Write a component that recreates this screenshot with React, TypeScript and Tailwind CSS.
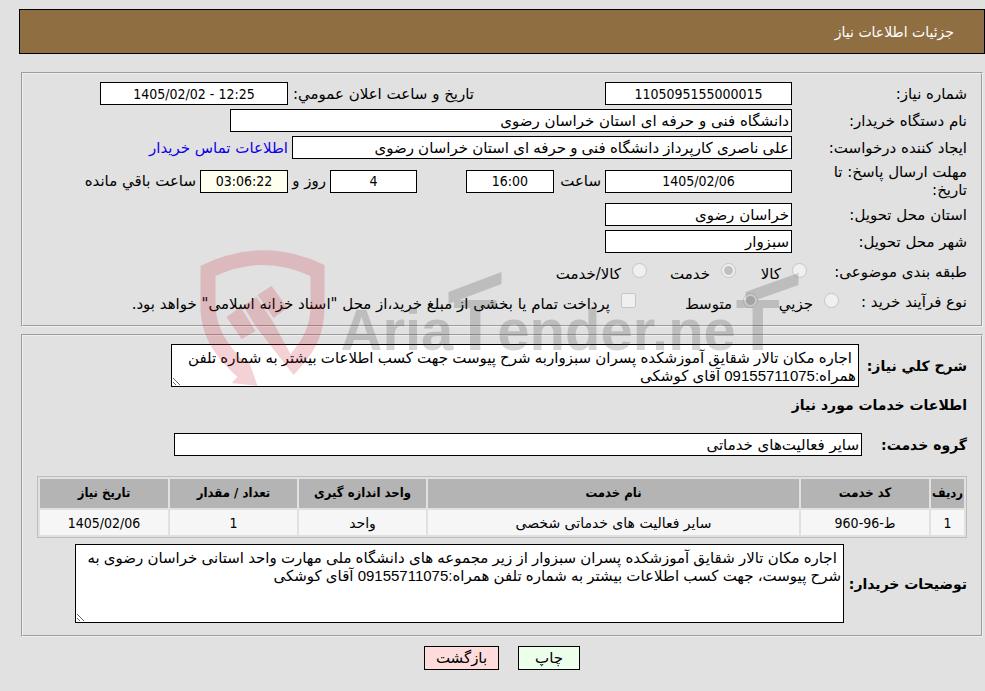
import { useId } from 'react';

const box = 'h-[23px] border border-black px-0.5';
const digits = "text-center text-sm font-['DejaVu_Sans_Condensed',sans-serif]";
const prose = "font-['Liberation_Sans','DejaVu_Sans',sans-serif]";

const Field = ({ label, value, className = '' }: { label: string; value: string; className?: string }) => (
  <input aria-label={label} readOnly defaultValue={value} className={`${box} bg-white ${className}`} />
);

const Row = ({ label, children }: { label: string; children: React.ReactNode }) => (
  <div className="flex items-center">
    <span className="w-[175px] shrink-0 pl-6">{label}</span>
    <div className="flex flex-1 items-center gap-1">{children}</div>
  </div>
);

const Choice = ({ label, name, type = 'radio', checked = false, className = '' }: {
  label: string; name: string; type?: string; checked?: boolean; className?: string;
}) => {
  const id = useId();
  const shape = type === 'radio' ? 'rounded-full' : 'rounded-xs';
  return (
    <span className={`flex items-start ${className}`}>
      <span className="relative mt-0.5 flex">
        <input
          id={id}
          type={type}
          name={name}
          disabled
          defaultChecked={checked}
          className={`peer size-[15px] appearance-none border border-[#c6c6c6] bg-[#f0f0f0] ${shape}`}
        />
        <span className="absolute inset-[3px] hidden rounded-full bg-[#c0c0c0] peer-checked:block" />
      </span>
      <label htmlFor={id} className="pt-1 pr-[11px] whitespace-nowrap">{label}</label>
    </span>
  );
};

const Watermark = () => (
  <svg
    aria-hidden="true"
    viewBox="186 240 613 150"
    className="pointer-events-none absolute top-[240px] left-1/2 h-[150px] w-[613px] -translate-x-1/2"
  >
    <g fill="#c8202e" opacity="0.2">
      <path d="M200 266Q262 235 324 265V306C324 336 314 353 293 375L255 326L243 306L256 297L272 321L290 354C304 338 310 324 310 306V276Q262 254 215 276V306C216 328 226 344 245 363L248 360L257 386L231 383L237 377C212 354 200 334 200 306Z" />
      <path d="M257 295L271 286L287 308L273 318Z" />
      <path d="M226 317L240 307L255 331L241 339Z" />
    </g>
    <g fill="#333" opacity="0.2">
      <path d="M448 292L501 272V284L448 304Z" />
      <path d="M745 292L798 273V285L745 304Z" />
      <text x="340" y="350" direction="ltr" fontSize="58" fontWeight="700" fontFamily="'Liberation Sans', sans-serif">
        Aria<tspan fontSize="72">T</tspan>ender.ne<tspan fontSize="72">T</tspan>
      </text>
    </g>
  </svg>
);

const headers = ['ردیف', 'کد خدمت', 'نام خدمت', 'واحد اندازه گیری', 'تعداد / مقدار', 'تاریخ نیاز'];
const rows = [['1', 'ط-96-960', 'سایر فعالیت های خدماتی شخصی', 'واحد', '1', '1405/02/06']];

export default function App() {
  return (
    <div
      dir="rtl"
      className="relative min-h-screen bg-[#e1e1e1] pt-[9px] pb-5 pl-[19px] font-['DejaVu_Sans',sans-serif] text-[15px] leading-[18px] text-black"
    >
      <header className="flex h-[45px] items-center border border-black bg-[#8f6e42] px-[30px] text-white">
        <h1 className="text-sm">جزئیات اطلاعات نیاز</h1>
      </header>

      <main className="mx-0.5 pt-[18px]">
        <section className="border-2 border-[#f0f0f0] px-[14px] pt-2 pb-3 [border-style:groove]">
          <div className="flex flex-col gap-1">
            <Row label="شماره نیاز:">
              <Field label="شماره نیاز" value="1105095155000015" className={`w-[187px] ${digits}`} />
              <label htmlFor="announce" className="mr-[127px] w-[182px] whitespace-nowrap">تاریخ و ساعت اعلان عمومي:</label>
              <input id="announce" readOnly dir="ltr" defaultValue="1405/02/02 - 12:25" className={`${box} w-[188px] bg-white ${digits}`} />
            </Row>
            <Row label="نام دستگاه خریدار:">
              <Field label="نام دستگاه خریدار" value="دانشگاه فنی و حرفه ای استان خراسان رضوی" className="w-[562px]" />
            </Row>
            <Row label="ایجاد کننده درخواست:">
              <Field label="ایجاد کننده درخواست" value="علی ناصری کارپرداز دانشگاه فنی و حرفه ای استان خراسان رضوی" className={`w-[500px] ${prose}`} />
              <a href="#" className="text-[#1000e8]">اطلاعات تماس خریدار</a>
            </Row>
            <Row label="مهلت ارسال پاسخ: تا تاریخ:">
              <Field label="تاریخ" value="1405/02/06" className={`w-[187px] ${digits}`} />
              <label htmlFor="hour" className="w-[43px]">ساعت</label>
              <input id="hour" readOnly defaultValue="16:00" className={`${box} w-[88px] bg-white ${digits}`} />
              <input id="days" readOnly defaultValue="4" className={`${box} mr-[45px] w-[87px] bg-white ${digits}`} />
              <label htmlFor="days" className="w-[34px] whitespace-nowrap">روز و</label>
              <input id="left" readOnly defaultValue="03:06:22" className={`${box} w-[88px] bg-[#fffff0] ${digits}`} />
              <label htmlFor="left">ساعت باقي مانده</label>
            </Row>
            <Row label="استان محل تحویل:">
              <Field label="استان محل تحویل" value="خراسان رضوی" className="w-[187px]" />
            </Row>
            <Row label="شهر محل تحویل:">
              <Field label="شهر محل تحویل" value="سبزوار" className="w-[187px]" />
            </Row>
          </div>
          <div className="flex pt-2">
            <span className="w-[160px] pt-0.5">طبقه بندی موضوعی:</span>
            <Choice name="category" label="کالا" className="w-[71px]" />
            <Choice name="category" label="خدمت" checked className="w-[89px]" />
            <Choice name="category" label="کالا/خدمت" />
          </div>
          <div className="flex pt-2">
            <span className="w-[128px] pt-0.5">نوع فرآیند خرید :</span>
            <Choice name="process" label="جزیي" className="w-[81px]" />
            <Choice name="process" label="متوسط" checked className="w-[122px]" />
            <Choice name="treasury" type="checkbox" label={'پرداخت تمام یا بخشی از مبلغ خرید،از محل "اسناد خزانه اسلامی" خواهد بود.'} />
          </div>
        </section>

        <section className="mt-[7px] border-2 border-[#f0f0f0] px-[14px] pt-2 pb-3 [border-style:groove]">
          <div className="flex items-center gap-[5px] pl-[134px]">
            <label htmlFor="summary" className="w-[103px] text-sm font-bold">شرح کلي نیاز:</label>
            <textarea
              id="summary"
              readOnly
              className={`block h-[43px] flex-1 overflow-hidden border border-black bg-white px-0.5 pt-1 ${prose}`}
              defaultValue={' اجاره مکان تالار شقایق آموزشکده پسران سبزواربه شرح پیوست جهت کسب اطلاعات بیشتر به شماره تلفن همراه:09155711075 آقای کوشکی'}
            />
          </div>
          <h2 className="pt-2 text-sm font-bold">اطلاعات خدمات مورد نیاز</h2>
          <div className="flex items-center pt-[18px] pl-[137px]">
            <label htmlFor="group" className="w-[105px] text-sm font-bold">گروه خدمت:</label>
            <input id="group" readOnly defaultValue="سایر فعالیت‌های خدماتی" className={`${box} min-w-0 flex-1 bg-white`} />
          </div>
          <table className="mt-5 w-full table-fixed border-separate border-spacing-0.5 border border-[#bcbcbc] text-center text-sm">
            <colgroup>
              <col className="w-[33px]" />
              <col className="w-[128px]" />
              <col />
              <col className="w-[127px]" />
              <col className="w-[127px]" />
              <col className="w-[128px]" />
            </colgroup>
            <thead>
              <tr className="h-[29px] bg-[#b4b4b4] font-['DejaVu_Sans_Condensed',sans-serif] text-[13px]">
                {headers.map((h) => <th key={h} className="p-0 whitespace-nowrap">{h}</th>)}
              </tr>
            </thead>
            <tbody>
              {rows.map((row) => (
                <tr key={row[0]} className="h-[25px] bg-[#f6f6f6]">
                  {row.map((cell, i) => (
                    <td key={i} className={/\d/.test(cell) ? "p-0 font-['DejaVu_Sans_Condensed',sans-serif]" : 'p-0'}>{cell}</td>
                  ))}
                </tr>
              ))}
            </tbody>
          </table>
          <div className="flex items-center gap-[5px] pt-[6px] pl-[38px]">
            <label htmlFor="notes" className="w-[118px] text-sm font-bold whitespace-nowrap">توضیحات خریدار:</label>
            <textarea
              id="notes"
              readOnly
              className={`block h-[79px] flex-1 overflow-hidden border border-black bg-white px-0.5 pt-1 ${prose}`}
              defaultValue={' اجاره مکان تالار شقایق آموزشکده پسران سبزوار از زیر مجموعه های دانشگاه ملی مهارت واحد استانی خراسان رضوی به شرح پیوست، جهت کسب اطلاعات بیشتر به شماره تلفن همراه:09155711075 آقای کوشکی'}
            />
          </div>
        </section>

        <div className="flex justify-center gap-[19px] pt-[9px]">
          <button type="button" className="h-6 w-[62px] border border-black bg-[#ebffeb]">چاپ</button>
          <button type="button" className="h-6 w-[75px] border border-black bg-[#ffdcdc]">بازگشت</button>
        </div>
      </main>
      <Watermark />
    </div>
  );
}
